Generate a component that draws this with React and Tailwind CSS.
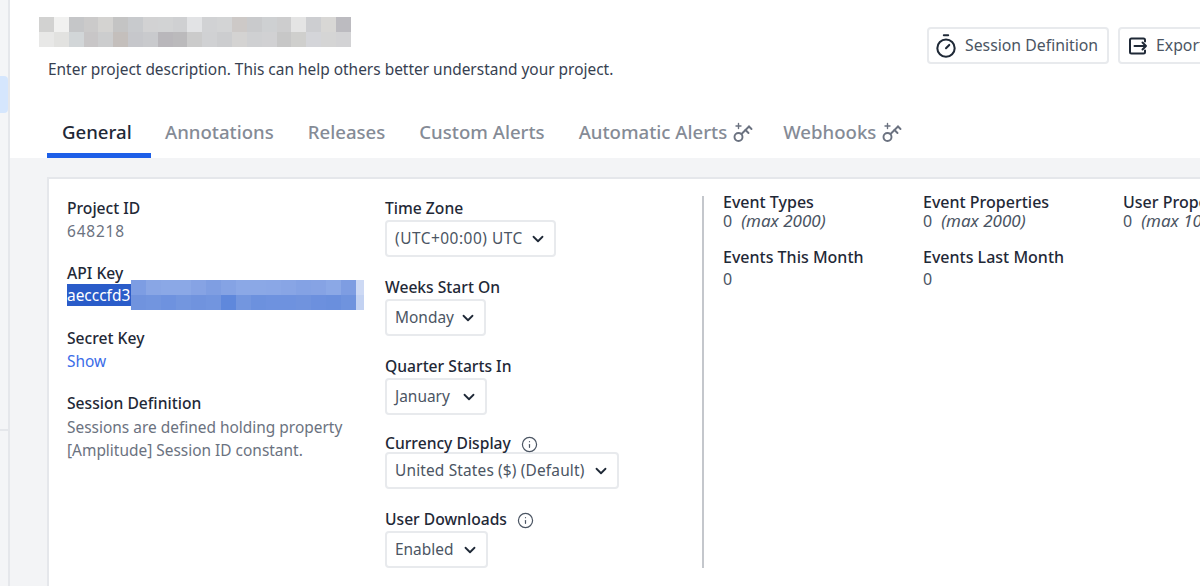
import { ChevronDown, Info, Timer } from "lucide-react";

const titleBlur = [
  ["#d2d2d1", "#f1f1f0", "#c5c6c8", "#cbcaca", "#d4d3d1", "#c4c4c4", "#c8cacd", "#d2d2d3", "#d2d3d4", "#cfd0d2", "#e2e3e5", "#d1d2d4", "#d3d4d5", "#cdc9c7", "#c9cacc", "#ced0d2", "#cdcdce", "#e4e4e4", "#cdced1", "#d8d7d5", "#bcbbc0"],
  ["#e8e8e7", "#e2e2e0", "#d2d6d8", "#c8c6c7", "#cccdce", "#c4bfbc", "#c6c7cb", "#c9cacd", "#b9b7bb", "#bbbabc", "#cbcbcb", "#d0d1d3", "#cccdcf", "#d4d3d2", "#cfd0d2", "#d1d1d3", "#c7c7c7", "#cfcfcd", "#d4d5d9", "#d5d5d5", "#d3d3d5"],
];

const keyBlur = [
  ["#7d9de3", "#89a6e5", "#8ba8e6", "#8ba8e6", "#86a3e4", "#7f9ee2", "#85a3e4", "#8ba8e6", "#8ba8e6", "#8aa7e6", "#88a5e5", "#84a2e4", "#86a3e4", "#8ba8e6", "#7e9de2"],
  ["#7093de", "#7295df", "#6e92df", "#7396df", "#7093de", "#7295df", "#5f88dc", "#7396df", "#6c91de", "#6e92df", "#6e92df", "#7093de", "#6c90de", "#6a8fdd", "#6f93de"],
];

function KeyIcon() {
  return (
    <svg width="20" height="22" viewBox="0 0 20 22" fill="none" stroke="#6b7280" strokeWidth="1.9" strokeLinecap="round" strokeLinejoin="round">
      <circle cx="5.5" cy="16" r="4" />
      <path d="M8.5 13 L16 5.5" />
      <path d="M12.5 9 L15.5 12" />
      <path d="M16 5.5 L18.5 8" />
      <path d="M5.5 2.5 V7.5 M3 5 H8" strokeWidth="1.4" />
    </svg>
  );
}

function ExportIcon() {
  return (
    <svg width="20" height="20" viewBox="0 0 20 20" fill="none" stroke="#1f2937" strokeWidth="2" strokeLinecap="round" strokeLinejoin="round">
      <path d="M17 5.5 V4 a1.5 1.5 0 0 0 -1.5 -1.5 H3.5 A1.5 1.5 0 0 0 2 4 V16 a1.5 1.5 0 0 0 1.5 1.5 H15.5 a1.5 1.5 0 0 0 1.5 -1.5 V14.5" />
      <path d="M6.5 10 H18 M14.5 6.5 L18 10 L14.5 13.5" />
    </svg>
  );
}

function Tab({ label, active, locked }) {
  return (
    <div
      className={`flex h-[48px] items-center gap-[6px] text-[18.6px] font-medium ${
        active
          ? "-mr-[6px] w-[104px] border-b-[5px] border-[#1d5fe8] pl-[15px] text-[#1f2937]"
          : "pb-[4px] pl-[14px] text-[#858b96]"
      } ${locked ? "pr-[10px]" : "pr-[14px]"}`}
    >
      {label}
      {locked && <KeyIcon />}
    </div>
  );
}

function Select({ value, className = "" }) {
  return (
    <div className={`-mt-[1px] flex h-[37px] items-center justify-between rounded-[4px] border-2 border-[#e8eaed] pl-[8px] pr-[7px] text-[#4b5563] ${className}`}>
      {value}
      <ChevronDown size={18} strokeWidth={2.4} className="text-[#1f2937]" />
    </div>
  );
}

function Label({ children, info, className = "" }) {
  return (
    <div className={`flex h-[24px] items-center gap-[10px] text-[15.65px] font-medium text-[#1f2937] ${className}`}>
      {children}
      {info && <Info size={17} strokeWidth={1.7} className="text-[#4b5563]" />}
    </div>
  );
}

function Stat({ label, value, max, className = "-mt-[1px] h-[19px] leading-[19px]" }) {
  return (
    <div className="w-[200px] shrink-0">
      <div className="h-[20px] text-[16px] leading-[20px] font-medium text-[#1f2937]">{label}</div>
      <div className={`flex items-baseline gap-[9px] text-[16px] text-[#4b5563] ${className}`}>
        {value}
        {max && <span className="text-[17px] italic">(max {max})</span>}
      </div>
    </div>
  );
}

export default function App() {
  return (
    <div className="flex h-[586px] w-[1200px] overflow-hidden bg-white font-['Noto_Sans',sans-serif] text-[15.45px]">
      <aside className="w-[10px] shrink-0 border-r-2 border-[#e5e7eb] bg-[#f4f5f7]">
        <div className="mt-[76px] h-[37px] w-[8px] rounded-r-[4px] bg-[#d5e6fd]" />
        <div className="mt-[316px] h-[2px] bg-[#e5e7eb]" />
      </aside>

      <main className="flex w-[1300px] shrink-0 flex-col">
        <header className="flex h-[110px] shrink-0 justify-between pl-[29px] pr-[82px]">
          <div className="pt-[17px]">
            <div className="flex flex-col">
              {titleBlur.map((row, i) => (
                <div key={i} className="flex">
                  {row.map((color, j) => (
                    <div key={j} className="h-[15px] w-[14.85px]" style={{ backgroundColor: color }} />
                  ))}
                </div>
              ))}
            </div>
            <p className="mt-[9px] ml-[9px] leading-[26px] text-[#374151]">
              Enter project description. This can help others better understand your project.
            </p>
          </div>
          <div className="flex gap-[9px] pt-[27px]">
            <button type="button" className="flex h-[37px] w-[182px] items-center gap-[6px] rounded-[4px] border-2 border-[#e8eaed] pl-[4px] text-[15.8px] text-[#4b5563]">
              <Timer size={26} strokeWidth={1.9} className="text-[#1f2937]" />
              Session Definition
            </button>
            <button type="button" className="flex h-[37px] w-[110px] items-center gap-[8px] rounded-[4px] border-2 border-[#e8eaed] pl-[8px] text-[15.8px] text-[#4b5563]">
              <ExportIcon />
              Export
            </button>
          </div>
        </header>

        <nav className="flex h-[48px] shrink-0 gap-[6px] pl-[37px]">
          <Tab label="General" active />
          <Tab label="Annotations" />
          <Tab label="Releases" />
          <Tab label="Custom Alerts" />
          <Tab label="Automatic Alerts" locked />
          <Tab label="Webhooks" locked />
        </nav>

        <section className="flex-1 bg-[#f3f4f6] pl-[37px] pt-[19px]">
          <div className="flex h-[500px] border-2 border-[#e5e7eb] bg-white pl-[18px] pt-[18px]">
            <div className="w-[318px] shrink-0">
              <Label>Project ID</Label>
              <div className="-mt-[1px] h-[22px] leading-[22px] tracking-[0.8px] text-[#6b7280]">648218</div>

              <Label className="mt-[20px] h-[20px]">API Key</Label>
              <div className="flex">
                <span className="-mt-[2px] h-[22px] w-[64px] bg-[#2a5cc9] leading-[22px] text-white">aecccfd3</span>
                <div className="-mt-[6px] flex flex-col">
                  {keyBlur.map((row, i) => (
                    <div key={i} className="flex">
                      {row.map((color, j) => (
                        <div key={j} className="h-[15px] w-[15px]" style={{ backgroundColor: color }} />
                      ))}
                      <div className={`h-[15px] w-[8px] ${i === 0 ? "bg-[#cdd9f4]" : "bg-[#c3d2f2]"}`} />
                    </div>
                  ))}
                </div>
              </div>

              <Label className="mt-[17px]">Secret Key</Label>
              <div className="-mt-[1px] h-[22px] leading-[22px] text-[#3b6ce8]">Show</div>

              <Label className="mt-[20px]">Session Definition</Label>
              <p className="w-[290px] leading-[23px] text-[#6b7280]">
                Sessions are defined holding property [Amplitude] Session ID constant.
              </p>
            </div>

            <div className="w-[317px] shrink-0">
              <Label>Time Zone</Label>
              <Select value={<span className="tracking-[0.5px]">(UTC+00:00) UTC</span>} className="w-[171px]" />
              <Label className="mt-[19px]">Weeks Start On</Label>
              <Select value="Monday" className="w-[101px]" />
              <Label className="mt-[19px]">Quarter Starts In</Label>
              <Select value="January" className="w-[102px]" />
              <Label info className="mt-[17px]">Currency Display</Label>
              <Select value={<span className="tracking-[0.15px]">United States ($) (Default)</span>} className="-mt-[4px] w-[234px]" />
              <Label info className="mt-[19px]">User Downloads</Label>
              <Select value="Enabled" className="w-[103px]" />
            </div>

            <div className="-mt-[1px] h-[372px] border-l-2 border-[#c4c7cc] pl-[19px]">
              <div className="-mt-[4px] flex">
                <Stat label="Event Types" value="0" max="2000" />
                <Stat label="Event Properties" value="0" max="2000" />
                <Stat label="User Properties" value="0" max="1000" />
              </div>
              <div className="mt-[17px] flex">
                <Stat label="Events This Month" value="0" className="mt-[1px] h-[22px] leading-[22px]" />
                <Stat label="Events Last Month" value="0" className="mt-[1px] h-[22px] leading-[22px]" />
              </div>
            </div>
          </div>
        </section>
      </main>
    </div>
  );
}
